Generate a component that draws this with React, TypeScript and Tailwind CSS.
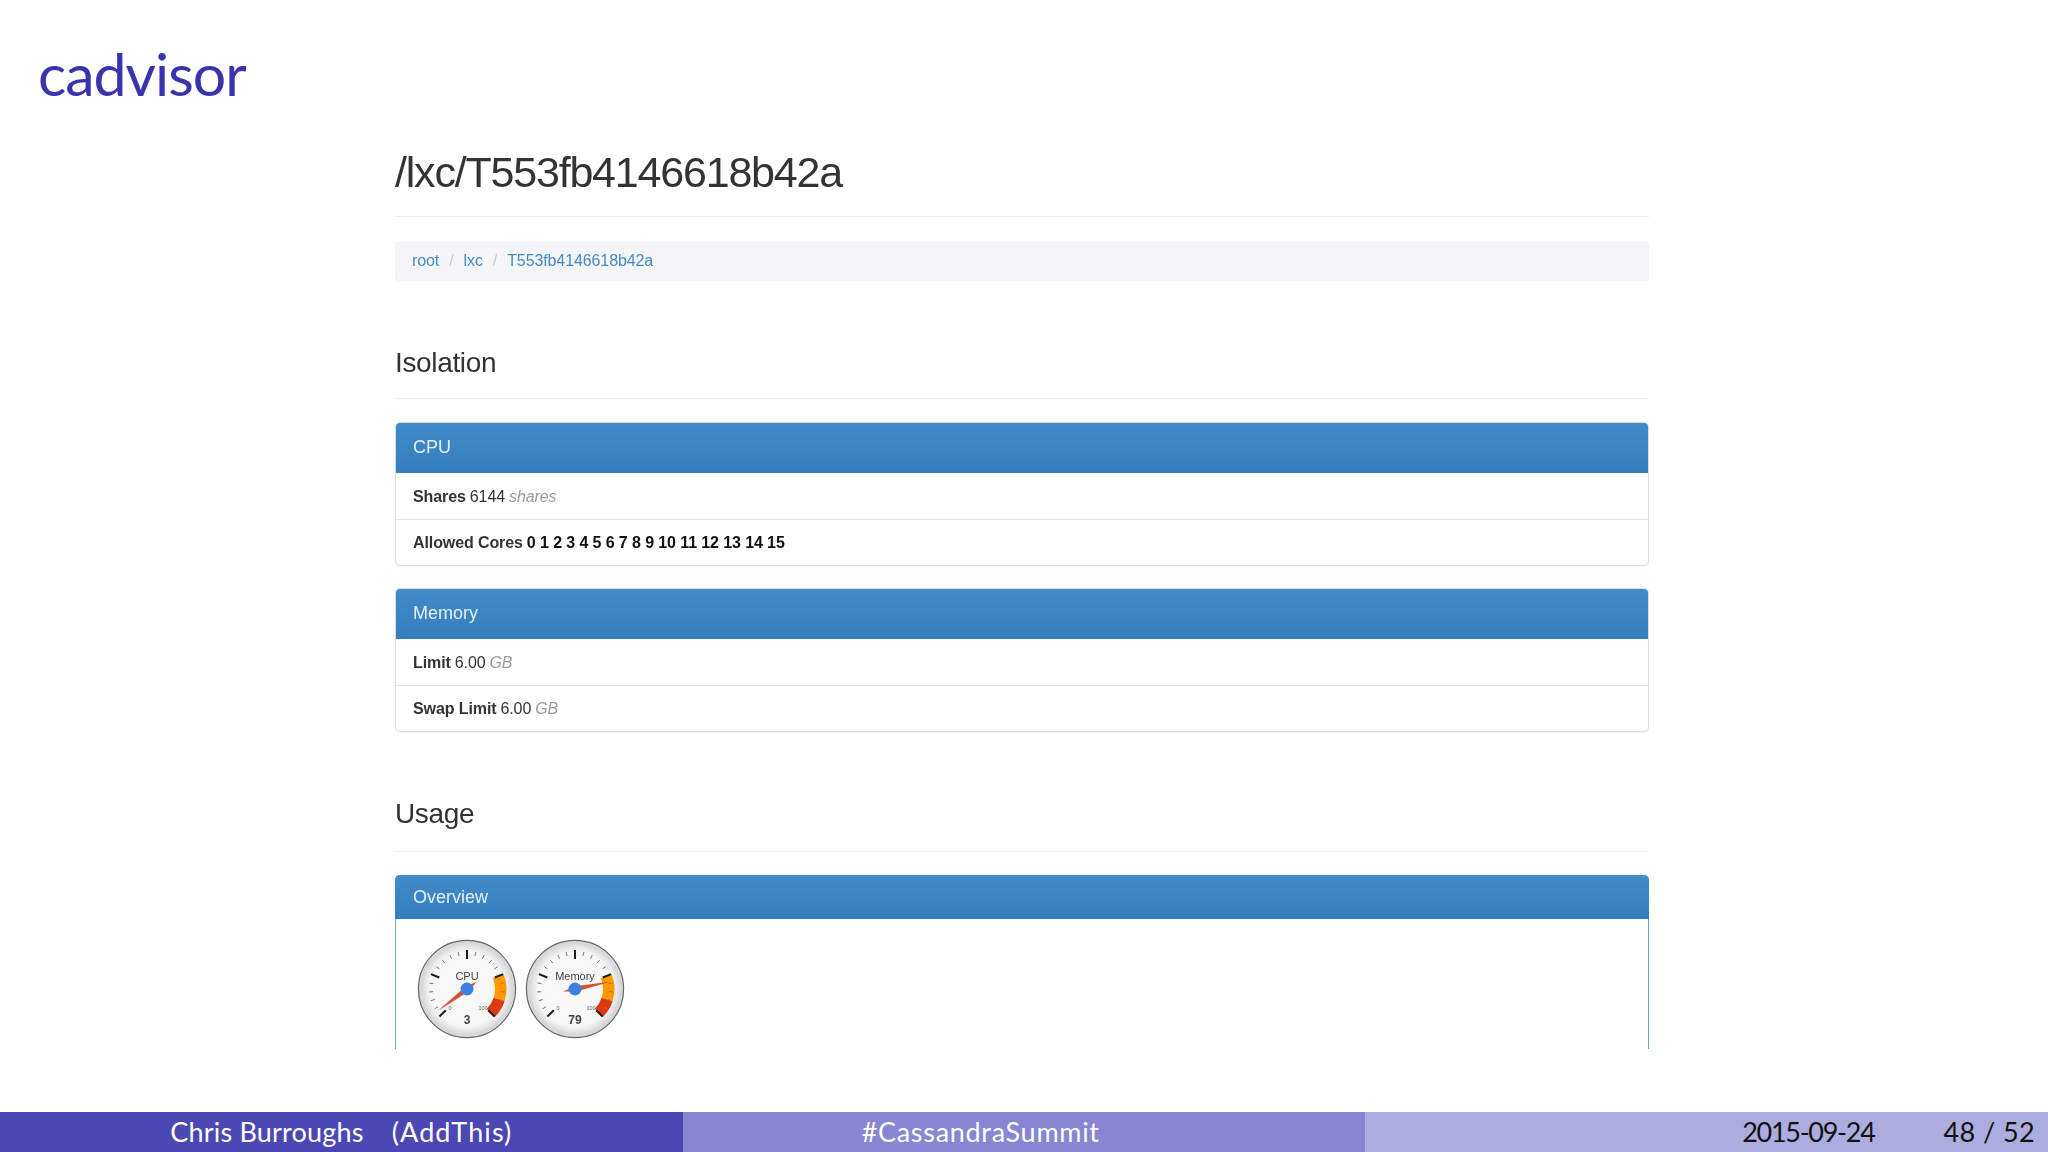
import React from "react";

function pt(r: number, deg: number, cx = 50, cy = 50) {
  const a = ((deg - 90) * Math.PI) / 180;
  return [cx + r * Math.cos(a), cy + r * Math.sin(a)];
}
const ang = (p: number) => -135 + 2.7 * p;

function band(from: number, to: number, r1: number, r2: number) {
  const [a, b] = pt(r2, ang(from));
  const [c, d] = pt(r2, ang(to));
  const [e, f] = pt(r1, ang(to));
  const [g, h] = pt(r1, ang(from));
  return `M${a} ${b}A${r2} ${r2} 0 0 1 ${c} ${d}L${e} ${f}A${r1} ${r1} 0 0 0 ${g} ${h}Z`;
}

function Gauge({ label, value }: { label: string; value: number }) {
  const id = `g${label}`;
  const ticks: React.ReactNode[] = [];
  for (let i = 0; i <= 20; i++) {
    const major = i % 5 === 0;
    const [x1, y1] = pt(major ? 39 : 38, ang(i * 5));
    const [x2, y2] = pt(major ? 30 : 34, ang(i * 5));
    const inBand = !major && i > 15;
    ticks.push(
      <line key={i} x1={x1} y1={y1} x2={x2} y2={y2} stroke={major ? "#1c1c1c" : inBand ? "#c26a00" : "#666"} strokeWidth={major ? 2 : 0.9} />
    );
  }
  const a = ang(value);
  const [tx, ty] = pt(37, a);
  const [bx, by] = pt(12, a + 180);
  const [lx, ly] = pt(2.8, a + 90);
  const [rx, ry] = pt(2.8, a - 90);
  return (
    <svg width="100" height="100" viewBox="0 0 100 100" className="shrink-0">
      <defs>
        <radialGradient id={id} cx="50%" cy="50%" r="50%">
          <stop offset="0%" stopColor="#fafafa" />
          <stop offset="84%" stopColor="#f6f6f6" />
          <stop offset="100%" stopColor="#dedede" />
        </radialGradient>
      </defs>
      <circle cx="50" cy="50" r="48.6" fill="#d8d8d8" stroke="#666" strokeWidth="1.2" />
      <circle cx="50" cy="50" r="44.5" fill={`url(#${id})`} />
      <path d={band(75, 90, 28, 39.5)} fill="#ff9900" />
      <path d={band(90, 100, 28, 39.5)} fill="#dc3912" />
      {ticks}
      <text x="50" y="41" textAnchor="middle" fontSize="11" fill="#444" fontFamily="Liberation Sans, sans-serif">{label}</text>
      <text x="33" y="71" textAnchor="middle" fontSize="5.5" fill="#666" fontFamily="Liberation Sans, sans-serif">0</text>
      <text x="66" y="71" textAnchor="middle" fontSize="5.5" fill="#666" fontFamily="Liberation Sans, sans-serif">100</text>
      <text x="50" y="84.5" textAnchor="middle" fontSize="12" fontWeight="700" fill="#444" fontFamily="Liberation Sans, sans-serif">{value}</text>
      <polygon points={`${tx},${ty} ${lx},${ly} ${bx},${by} ${rx},${ry}`} fill="#d9502e" />
      <circle cx="50" cy="50" r="6.5" fill="#3b7fe0" />
    </svg>
  );
}

function Panel({ title, rows }: { title: string; rows: React.ReactNode[] }) {
  return (
    <section className="rounded-[5px] border border-[#dcdcdc] bg-white shadow-[0_1px_2px_rgba(0,0,0,0.06)] overflow-hidden">
      <div className="h-[51px] -mt-px -mx-px flex items-center px-[18px] text-[18px] text-[#e6f0f9] bg-gradient-to-b from-[#428bca] to-[#357ebd]">
        {title}
      </div>
      {rows.map((r, i) => (
        <div key={i} className={`h-[46px] flex items-center pt-[1px] px-[17px] text-[16px] tracking-[-0.1px] text-[#333] gap-[4px] ${i ? "border-t border-[#e2e2e2]" : ""}`}>
          {r}
        </div>
      ))}
    </section>
  );
}

function SubHead({ children, className }: { children: React.ReactNode; className: string }) {
  return <h2 className={`border-b border-[#eeeeee] text-[28px] leading-[32px] tracking-[-0.35px] text-[#333] ${className}`}>{children}</h2>;
}

export default function App() {
  return (
    <div className="w-[2048px] h-[1152px] bg-white flex flex-col overflow-hidden font-['Liberation_Sans',sans-serif]">
      <h1 className="pl-[38px] pt-[39px] h-[118px] text-[59px] leading-[70px] text-[#3a33ae] font-['Lato',sans-serif] tracking-[-1px]">
        cadvisor
      </h1>
      <main className="ml-[395px] w-[1254px] h-[931px] overflow-hidden blur-[0.6px]">
        <div className="h-[99px] border-b border-[#eeeeee] flex items-start pt-[30px] text-[43px] leading-[48px] text-[#333] tracking-[-1.2px]">
          /lxc/T553fb4146618b42a
        </div>
        <nav className="mt-[24px] h-[40px] rounded-[4px] bg-[#f5f5f7] flex items-center pl-[17px] text-[16px] tracking-[-0.1px] text-[#428bca]">
          <span>root</span>
          <span className="text-[#ccc] mx-[10px]">/</span>
          <span>lxc</span>
          <span className="text-[#ccc] mx-[10px]">/</span>
          <span>T553fb4146618b42a</span>
        </nav>
        <SubHead className="mt-[66px] h-[52px]">Isolation</SubHead>
        <div className="mt-[23px] flex flex-col gap-[22px]">
          <Panel
            title="CPU"
            rows={[
              <><b>Shares</b><span>6144</span><i className="text-[#999]">shares</i></>,
              <><b>Allowed Cores</b><b className="text-[#111] whitespace-pre">0 1 2 3 4 5 6 7 8 9 10 11 12 13 14 15</b></>,
            ]}
          />
          <Panel
            title="Memory"
            rows={[
              <><b>Limit</b><span>6.00</span><i className="text-[#999]">GB</i></>,
              <><b>Swap Limit</b><span>6.00</span><i className="text-[#999]">GB</i></>,
            ]}
          />
        </div>
        <SubHead className="mt-[66px] h-[54px]">Usage</SubHead>
        <section className="mt-[23px] rounded-t-[5px] border-x border-[#6ea3d4] h-[200px]">
          <div className="h-[44px] -mx-px rounded-t-[5px] flex items-center px-[18px] text-[18px] text-[#e6f0f9] bg-gradient-to-b from-[#428bca] to-[#357ebd]">
            Overview
          </div>
          <div className="flex gap-[8px] pl-[21px] pt-[20px]">
            <Gauge label="CPU" value={3} />
            <Gauge label="Memory" value={79} />
          </div>
        </section>
      </main>
      <footer className="mt-auto h-[40px] grid grid-cols-3 text-[27px] leading-[40px] font-['Lato',sans-serif]">
        <div className="bg-[#4b47b5] text-white flex justify-center gap-[28px]">
          <span className="tracking-[0.2px]">Chris Burroughs</span>
          <span className="tracking-[1.1px]">(AddThis)</span>
        </div>
        <div className="bg-[#8885d3] text-white pl-[179px] tracking-[0.7px]">#CassandraSummit</div>
        <div className="bg-[#adacdf] text-[#111] flex justify-end gap-[69px] pr-[13px]">
          <span className="tracking-[-1.3px]">2015-09-24</span>
          <span className="tracking-[0.4px]">48 / 52</span>
        </div>
      </footer>
    </div>
  );
}
